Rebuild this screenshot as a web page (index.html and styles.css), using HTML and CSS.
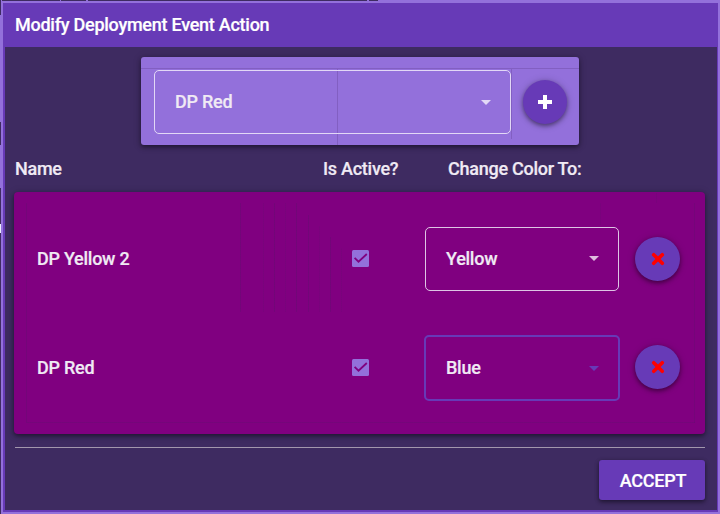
FILE: index.html
```html
<!DOCTYPE html>
<html lang="en">
<head>
<meta charset="utf-8">
<title>Modify Deployment Event Action</title>
<link rel="stylesheet" href="styles.css">
</head>
<body>
<div class="dialog">
  <header class="title">Modify Deployment Event Action</header>
  <main class="content">
    <section class="picker">
      <div class="select"><span>DP Red</span><i class="arrow"></i></div>
      <button class="fab" aria-label="Add"><svg width="14" height="14" viewBox="0 0 14 14"><path d="M7 0v14M0 7h14" stroke="#fff" stroke-width="4"/></svg></button>
    </section>
    <div class="heads"><span>Name</span><span>Is Active?</span><span>Change Color To:</span></div>
    <section class="list">
      <div class="row">
        <span class="name">DP Yellow 2</span>
        <svg class="check" width="17" height="17" viewBox="0 0 17 17"><rect width="17" height="17" rx="1.5" fill="#9370db"/><path d="M2.6 7.8 6.5 11.7 14.8 4" fill="none" stroke="#800080" stroke-width="1.8"/></svg>
        <div class="select"><span>Yellow</span><i class="arrow"></i></div>
        <button class="fab" aria-label="Remove"><svg width="14" height="14" viewBox="0 0 14 14"><path d="M2.7 2.7l8.6 8.6M11.3 2.7l-8.6 8.6" stroke="red" stroke-width="3.6" stroke-linecap="round"/></svg></button>
      </div>
      <div class="row">
        <span class="name">DP Red</span>
        <svg class="check" width="17" height="17" viewBox="0 0 17 17"><rect width="17" height="17" rx="1.5" fill="#9370db"/><path d="M2.6 7.8 6.5 11.7 14.8 4" fill="none" stroke="#800080" stroke-width="1.8"/></svg>
        <div class="select focused"><span>Blue</span><i class="arrow"></i></div>
        <button class="fab" aria-label="Remove"><svg width="14" height="14" viewBox="0 0 14 14"><path d="M2.7 2.7l8.6 8.6M11.3 2.7l-8.6 8.6" stroke="red" stroke-width="3.6" stroke-linecap="round"/></svg></button>
      </div>
    </section>
    <footer class="actions"><button class="accept">ACCEPT</button></footer>
  </main>
</div>
</body>
</html>
```
FILE: styles.css
```css
* { box-sizing: border-box; }
body {
  margin: 0;
  height: 514px;
  padding: 1px 0 0 1px;
  overflow: hidden;
  font: 500 18px/24px Roboto, "Liberation Sans", sans-serif;
  letter-spacing: -0.26px;
  -webkit-text-stroke: 0.2px;
  color: #f0eaf4;
  background:
    linear-gradient(#3e2b61, #3e2b61) 2px 0 / 58px 1px no-repeat,
    linear-gradient(#3e2b61, #3e2b61) 61px 0 / 25px 1px no-repeat,
    linear-gradient(#3e2b61, #3e2b61) 88px 0 / 279px 1px no-repeat,
    linear-gradient(#3e2b61, #3e2b61) 369px 0 / 9px 1px no-repeat,
    linear-gradient(#e9edff, #e9edff) 0 224px / 1px 9px no-repeat,
    linear-gradient(#3e2b61 15px, #9370db 15px 122px, #3e2b61 122px 145px, #9370db 145px 188px, #3e2b61 188px) 0 0 / 1px 100% no-repeat,
    #9370db;
}
button { font: inherit; letter-spacing: inherit; border: 0; padding: 0; }
.dialog {
  height: 513px;
  border: 2px solid #9370db;
  background: #3e2b61;
}
.title {
  height: 44px;
  padding: 10px 12px;
  color: #fff;
  background: #673ab7;
}
.content {
  height: 465px;
  padding: 10px 12px 0 9px;
  border: 2px solid #673ab7;
  border-width: 0 1px 2px 2px;
}
.picker {
  display: flex;
  align-items: flex-start;
  width: 438px;
  height: 88px;
  margin-left: 127px;
  padding: 13px 12px 0 13px;
  border-radius: 3px;
  box-shadow: 0 2px 4px #0006, 0 1px 8px #0003;
  background:
    linear-gradient(#825fc2, #825fc2) 0 11px / 100% 1px no-repeat,
    linear-gradient(#825fc2, #825fc2) 196px 12px / 1px 76px no-repeat,
    linear-gradient(#825fc2, #825fc2) 370px 12px / 1px 70px no-repeat,
    #9370db;
}
.select {
  display: flex;
  align-items: center;
  justify-content: space-between;
  width: 194px;
  height: 64px;
  padding: 0 19px 0 20px;
  border: 1px solid #dec5e5;
  border-radius: 5px;
}
.picker .select { width: 357px; border-color: #e2d8f6; }
.arrow {
  border: 5px solid transparent;
  border-top-color: #dfbddf;
  border-bottom: 0;
}
.picker .arrow { border-top-color: #e2d8f6; }
.focused {
  width: 196px;
  height: 66px;
  margin: 0 -1px;
  border: 2px solid #673ab7;
}
.focused .arrow { border-top-color: #673ab7; }
.fab {
  display: grid;
  place-items: center;
  width: 45px;
  height: 44px;
  border-radius: 50%;
  background: #673ab7;
  box-shadow: 0 2px 4px #0006, 0 1px 8px #0003;
}
.picker .fab { width: 44px; margin: 10px 0 0 12px; }
.heads {
  display: grid;
  grid-template-columns: 308px 125px auto;
  height: 47px;
  padding: 12px 0 0 1px;
}
.list {
  height: 242px;
  padding: 12px 24px 0 23px;
  border-radius: 4px;
  box-shadow: 0 2px 4px #0006, 0 1px 8px #0003;
  background:
    linear-gradient(#5d116d60, #5d116d60) 226px 11px / 1px 109px no-repeat,
    linear-gradient(#5d116d30, #5d116d30) 249px 11px / 1px 109px no-repeat,
    linear-gradient(#5d116d60, #5d116d60) 260px 11px / 1px 109px no-repeat,
    linear-gradient(#5d116d30, #5d116d30) 271px 11px / 1px 109px no-repeat,
    linear-gradient(#5d116d60, #5d116d60) 282px 11px / 1px 109px no-repeat,
    linear-gradient(#5d116d60, #5d116d60) 294px 23px / 1px 97px no-repeat,
    linear-gradient(#5d116d30, #5d116d30) 305px 34px / 1px 86px no-repeat,
    linear-gradient(#5d116d60, #5d116d60) 316px 45px / 1px 75px no-repeat,
    linear-gradient(#5d116d30, #5d116d30) 327px 56px / 1px 64px no-repeat,
    linear-gradient(#5d116d30, #5d116d30) 586px 11px / 1px 22px no-repeat,
    linear-gradient(#5d116d30, #5d116d30) 642px 1px / 1px 10px no-repeat,
    linear-gradient(#5d116d50, #5d116d50) 680px 11px / 1px 220px no-repeat,
    linear-gradient(#5d116d50, #5d116d50) 12px 230px / 669px 1px no-repeat,
    linear-gradient(#5d116d50, #5d116d50) 12px 11px / 1px 219px no-repeat,
    #800080;
}
.row {
  display: grid;
  grid-template-columns: 315px 73px 194px 45px;
  align-items: center;
  height: 109px;
}
.row + .row { height: 110px; }
.row + .row .fab, .row + .row .check { margin-bottom: 2px; }
.row .fab { margin-left: 16px; }
.actions {
  display: flex;
  justify-content: flex-end;
  margin: 13px 0 0 1px;
  padding-top: 12px;
  border-top: 1px solid #a297ad;
}
.accept {
  width: 106px;
  height: 40px;
  padding: 1px 0 0 2px;
  border-radius: 3px;
  color: #fff;
  background: #673ab7;
  box-shadow: 0 2px 4px #0006, 0 1px 5px #0003;
}
```
